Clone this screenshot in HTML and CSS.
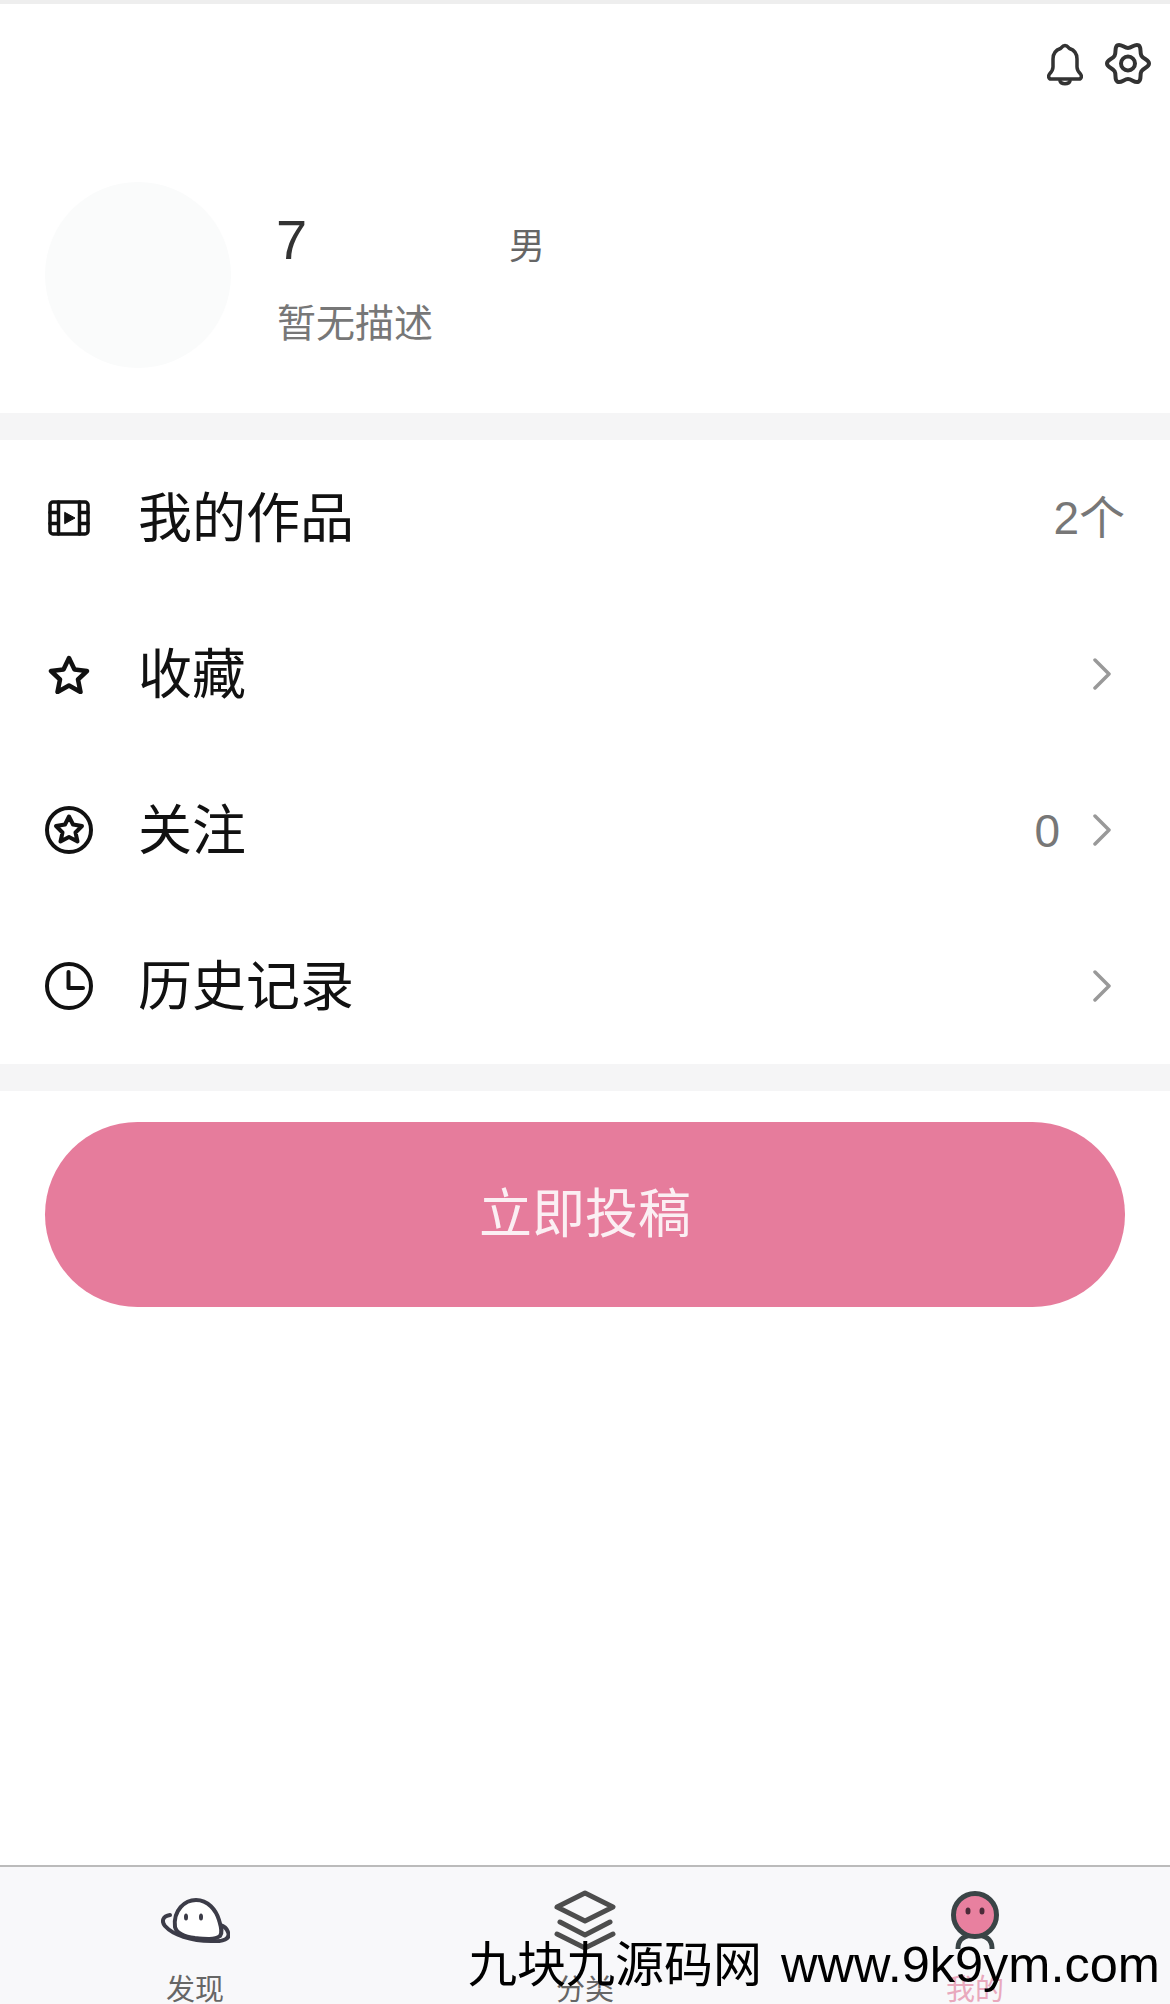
FILE: index.html
```html
<!DOCTYPE html>
<html lang="zh-CN">
<head>
    <meta charset="UTF-8">
    <meta name="viewport" content="width=device-width, initial-scale=1.0">
    <title>我的</title>
    <link rel="stylesheet" href="styles.css">
</head>
<body>
    <div class="page">
        <div class="top-strip"></div>

        <section class="profile">
            <div class="profile-actions">
                <svg class="icon-bell" viewBox="0 0 36 43">
                    <path d="M18 2.500c-2.500 0-3.500 2-4.500 3C9 7 6 11 6 16v8c0 3-1.500 5-3.500 7C1 33 1.500 36 4 36h28c2.500 0 3-3 1.500-5-2-2-3.500-4-3.500-7v-8c0-5-3-9-7.500-10.500-1-1-2-3-4.500-3z"/>
                    <path d="M13 38c1 3.500 9 3.500 10 0"/>
                </svg>
                <svg class="icon-gear" viewBox="0 0 46 43">
                    <path d="M44 21.500C44 25.500 38.420 25.790 36.420 29.250S36.960 37.690 33.500 39.690S27 37 23 37S15.960 41.690 12.500 39.690S11.580 32.710 9.580 29.250S2 25.500 2 21.500S7.580 17.210 9.580 13.750S9.040 5.310 12.500 3.310S19 6 23 6S30.040 1.310 33.500 3.310S34.420 10.290 36.420 13.750S44 17.500 44 21.500Z"/>
                    <circle cx="23" cy="21.500" r="7"/>
                </svg>
            </div>
            <div class="profile-main">
                <div class="avatar"></div>
                <div class="profile-info">
                    <div class="name-row">
                        <span class="name">7</span>
                        <span class="gender">男</span>
                    </div>
                    <div class="desc">暂无描述</div>
                </div>
            </div>
        </section>

        <div class="band"></div>

        <ul class="menu">
            <li class="menu-item">
                <span class="menu-icon">
                    <svg class="icon-film" viewBox="0 0 42 36">
                        <rect x="2" y="2" width="38" height="32" rx="3"/>
                        <path d="M10.500 2v32M31.500 2v32M2 12.500h8M2 23.500h8M32 12.500h8M32 23.500h8"/>
                        <path class="solid" d="M17 12.500l10 5.500-10 5.500z"/>
                    </svg>
                </span>
                <span class="menu-label">我的作品</span>
                <span class="menu-value menu-value-end">2个</span>
            </li>
            <li class="menu-item">
                <span class="menu-icon">
                    <svg class="icon-star" viewBox="0 0 42 39">
                        <path d="M21 3l5.500 11.500 12.500 1.500-9 8.500 2.500 12.500-11.500-6.500-11.500 6.500 2.500-12.500-9-8.500 12.500-1.500z"/>
                    </svg>
                </span>
                <span class="menu-label">收藏</span>
                <svg class="chevron" viewBox="0 0 18 32"><path d="M2 2l14 14-14 14"/></svg>
            </li>
            <li class="menu-item">
                <span class="menu-icon">
                    <svg class="icon-round" viewBox="0 0 48 48">
                        <circle cx="24" cy="24" r="22"/>
                        <path d="M24 10.500l4 8 9 1.500-6.500 6.500 2 9-8.500-4.500-8.500 4.500 2-9-6.500-6.500 9-1.500z"/>
                    </svg>
                </span>
                <span class="menu-label">关注</span>
                <span class="menu-value menu-value-zero">0</span>
                <svg class="chevron" viewBox="0 0 18 32"><path d="M2 2l14 14-14 14"/></svg>
            </li>
            <li class="menu-item">
                <span class="menu-icon">
                    <svg class="icon-round" viewBox="0 0 48 48">
                        <circle cx="24" cy="24" r="22"/>
                        <path d="M23.500 10v16H38"/>
                    </svg>
                </span>
                <span class="menu-label">历史记录</span>
                <svg class="chevron" viewBox="0 0 18 32"><path d="M2 2l14 14-14 14"/></svg>
            </li>
        </ul>

        <div class="band"></div>

        <div class="submit-wrap">
            <button class="submit-btn" type="button">立即投稿</button>
        </div>

        <div class="spacer"></div>

        <nav class="tabbar">
            <div class="tab">
                <span class="tab-icon">
                    <svg class="icon-ghost" viewBox="0 0 69 45">
                        <path class="ring" d="M9 17C2 18 0 23 4 28C12 37 30 43 50 43C62 44 70 41 67 34C66 31 63 28 59 27"/>
                        <path class="head" d="M14 29C12 12 24 2 35 2C47 2 55 12 58 22C60 29 62 34 59 38C54 42 44 41 34 40C26 39 16 37 14 29Z"/>
                        <ellipse class="eye" cx="25" cy="19" rx="2" ry="3.500"/>
                        <ellipse class="eye" cx="40" cy="19" rx="2" ry="3.500"/>
                    </svg>
                </span>
                <span class="tab-label">发现</span>
            </div>
            <div class="tab">
                <span class="tab-icon">
                    <svg class="icon-layers" viewBox="0 0 64 60">
                        <path d="M32 3L60 17L32 31L4 17Z"/>
                        <path d="M7 32L32 45L57 32"/>
                        <path d="M4 44L32 58L60 44"/>
                    </svg>
                </span>
                <span class="tab-label">分类</span>
            </div>
            <div class="tab tab-active">
                <span class="tab-icon">
                    <svg class="icon-person" viewBox="0 0 48 58">
                        <path class="legs" d="M7 57C7 48 14 44 24 44C34 44 41 48 41 57"/>
                        <circle class="face" cx="24" cy="24" r="21.500"/>
                        <ellipse class="eye" cx="17" cy="20" rx="2.500" ry="3.500"/>
                        <ellipse class="eye" cx="31" cy="20" rx="2.500" ry="3.500"/>
                    </svg>
                </span>
                <span class="tab-label">我的</span>
            </div>
        </nav>

        <div class="watermark">九块九源码网<span class="watermark-url">www.9k9ym.com</span></div>
    </div>
</body>
</html>
```
FILE: styles.css
```css
html, body {
    margin: 0;
    padding: 0;
    background: #fff;
}
body {
    font-family: "Noto Sans CJK SC", "Noto Sans", sans-serif;
    color: #111;
}
svg {
    display: block;
    fill: none;
    stroke-linecap: round;
    stroke-linejoin: round;
}
.page {
    position: relative;
    width: 1170px;
    height: 2004px;
    display: flex;
    flex-direction: column;
    overflow: hidden;
}
.top-strip {
    height: 4px;
    background: #eeeeee;
}
.band {
    height: 27px;
    background: #f5f5f6;
}

/* profile */
.profile {
    height: 409px;
    box-sizing: border-box;
    padding: 36px 19px 0 45px;
}
.profile-actions {
    display: flex;
    justify-content: flex-end;
    align-items: center;
    gap: 22px;
    height: 46px;
}
.icon-bell {
    width: 36px;
    height: 43px;
    margin-top: 3px;
    stroke: #333;
    stroke-width: 3.5;
}
.icon-gear {
    width: 46px;
    height: 43px;
    stroke: #333;
    stroke-width: 4;
}
.profile-main {
    display: flex;
    gap: 46px;
    margin-top: 96px;
}
.avatar {
    width: 186px;
    height: 186px;
    border-radius: 50%;
    background: #fafbfb;
}
.profile-info {
    padding-top: 28px;
}
.name-row {
    display: flex;
    align-items: center;
    height: 60px;
}
.name {
    width: 233px;
    margin-left: -1px;
    font-family: "Liberation Sans", sans-serif;
    font-size: 56px;
    line-height: 60px;
    color: #333;
}
.gender {
    font-size: 36px;
    line-height: 60px;
    color: #666;
    margin-top: 6px;
}
.desc {
    margin-top: 25px;
    font-size: 39px;
    line-height: 50px;
    color: #777;
}

/* menu */
.menu {
    list-style: none;
    margin: 0;
    padding: 0;
}
.menu-item {
    display: flex;
    align-items: center;
    height: 156px;
    padding: 0 45px;
}
.menu-icon {
    display: flex;
    justify-content: center;
    width: 48px;
    margin-right: 45px;
}
.menu-label {
    padding-bottom: 7px;
    font-size: 54px;
    line-height: 60px;
    color: #111;
}
.menu-value {
    margin-left: auto;
    margin-right: 33px;
    font-family: "Liberation Sans", "Noto Sans CJK SC", sans-serif;
    font-size: 46px;
    line-height: 60px;
    color: #777;
}
.menu-value-end {
    margin-right: 0;
}
.menu-value-zero {
    padding-top: 1px;
}
.chevron {
    width: 18px;
    height: 32px;
    margin-right: 14px;
    stroke: #999;
    stroke-width: 3.5;
}
.menu-label + .chevron {
    margin-left: auto;
}
.icon-film {
    width: 42px;
    height: 36px;
    stroke: #111;
    stroke-width: 3.5;
}
.icon-film .solid {
    fill: #111;
    stroke-width: 1;
}
.icon-star {
    width: 42px;
    height: 39px;
    stroke: #111;
    stroke-width: 4.5;
}
.icon-round {
    width: 48px;
    height: 48px;
    stroke: #111;
    stroke-width: 4;
}

/* submit button */
.submit-wrap {
    padding: 31px 45px 0;
}
.submit-btn {
    display: block;
    width: 100%;
    height: 185px;
    border: none;
    border-radius: 93px;
    background: #e67c9c;
    color: #fbeff3;
    font-family: inherit;
    font-size: 53px;
    padding: 0 0 10px;
}
.spacer {
    flex: 1;
}

/* tab bar */
.tabbar {
    display: grid;
    grid-template-columns: repeat(3, 1fr);
    height: 137px;
    border-top: 2px solid #bbbbbb;
    background: #f8f8fa;
}
.tab {
    display: flex;
    flex-direction: column;
    align-items: center;
    padding-top: 23px;
}
.tab-icon {
    display: flex;
    align-items: center;
    height: 60px;
}
.tab-label {
    margin-top: 22px;
    font-size: 29px;
    line-height: 30px;
    color: #666;
}
.tab-active .tab-label {
    color: #e9a9bd;
}
.icon-ghost {
    width: 69px;
    height: 45px;
    stroke: #3c3c48;
    stroke-width: 4;
}
.icon-ghost .head {
    fill: #fff;
}
.icon-ghost .eye {
    fill: #3c3c48;
    stroke: none;
}
.icon-layers {
    width: 64px;
    height: 60px;
    stroke: #4d4d4d;
    stroke-width: 5;
}
.icon-person {
    width: 48px;
    height: 58px;
}
.icon-person .legs {
    stroke: #3a4446;
    stroke-width: 5;
}
.icon-person .face {
    fill: #e8809f;
    stroke: #3a4446;
    stroke-width: 5;
}
.icon-person .eye {
    fill: #4a2a38;
}

.watermark {
    position: absolute;
    left: 468px;
    top: 1935px;
    font-family: "Liberation Sans", "Noto Sans CJK SC", sans-serif;
    font-size: 49px;
    line-height: 60px;
    color: #000;
    white-space: nowrap;
}
.watermark-url {
    margin-left: 19px;
    font-size: 50.500px;
}
```
